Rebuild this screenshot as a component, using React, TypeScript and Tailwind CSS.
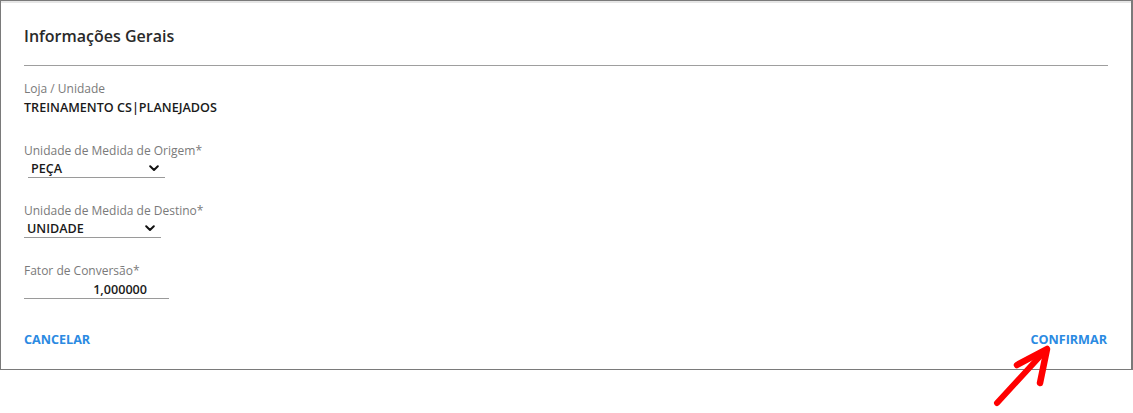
import React from "react";

const Chevron = () => (
  <svg width="10" height="7" viewBox="0 0 10 7" className="shrink-0">
    <path d="M1.2 1.3 L5 5 L8.8 1.3" fill="none" stroke="#111" strokeWidth="2" strokeLinecap="round" strokeLinejoin="round" />
  </svg>
);

const Label = ({ children }: { children: React.ReactNode }) => (
  <div className="text-[12px] leading-[18px] text-[#7a7a7a]">{children}</div>
);

const Select = ({ value, className }: { value: string; className: string }) => (
  <div className={`flex h-[18px] items-center justify-between border-b border-[#9a9a9a] pr-[6px] ${className}`}>
    <span className="text-[12.6px] font-semibold leading-[18px] text-[#1a1a1a]">{value}</span>
    <Chevron />
  </div>
);

export default function App() {
  return (
    <div className="relative h-[413px] w-full bg-white" style={{ fontFamily: '"Open Sans", "Noto Sans", sans-serif' }}>
      <div className="flex w-full flex-col border border-r-2 border-[#7a7a7a] px-[23px] pb-[20px] shadow-[inset_0_2px_0_#e6e6e6]">
        <h2 className="pt-[24px] text-[16px] font-semibold leading-[22px] text-[#2a2a2a]">Informações Gerais</h2>
        <div className="mt-[18px] h-px w-full bg-[#9e9e9e]" />

        <div className="mt-[14px]">
          <Label>Loja / Unidade</Label>
          <div className="mt-px text-[12.6px] font-semibold leading-[18px] text-[#1a1a1a]">TREINAMENTO CS|PLANEJADOS</div>
        </div>

        <div className="mt-[25px]">
          <Label>Unidade de Medida de Origem*</Label>
          <Select value="PEÇA" className="ml-[4px] w-[137px] pl-[3px]" />
        </div>

        <div className="mt-[24px]">
          <Label>Unidade de Medida de Destino*</Label>
          <Select value="UNIDADE" className="w-[137px] pl-[3px]" />
        </div>

        <div className="mt-[24px]">
          <Label>Fator de Conversão*</Label>
          <div className="h-[19px] w-[145px] border-b border-[#9a9a9a] pr-[22px] text-right text-[12.6px] font-semibold leading-[19px] text-[#1a1a1a]">
            1,000000
          </div>
        </div>

        <div className="mt-[32px] flex items-center justify-between">
          <button className="text-[12.6px] font-bold leading-[18px] text-[#2b8ae2]">CANCELAR</button>
          <button className="mr-px text-[12.6px] font-bold leading-[18px] text-[#2b8ae2]">CONFIRMAR</button>
        </div>
      </div>

      <svg className="absolute left-[985px] top-[340px]" width="70" height="70" viewBox="0 0 70 70">
        <path d="M12 63 L58 13" fill="none" stroke="#ff0000" strokeWidth="6" strokeLinecap="round" />
        <path d="M32 25 L62 9 L55 43" fill="none" stroke="#ff0000" strokeWidth="6.5" strokeLinecap="round" strokeLinejoin="round" />
      </svg>
    </div>
  );
}
